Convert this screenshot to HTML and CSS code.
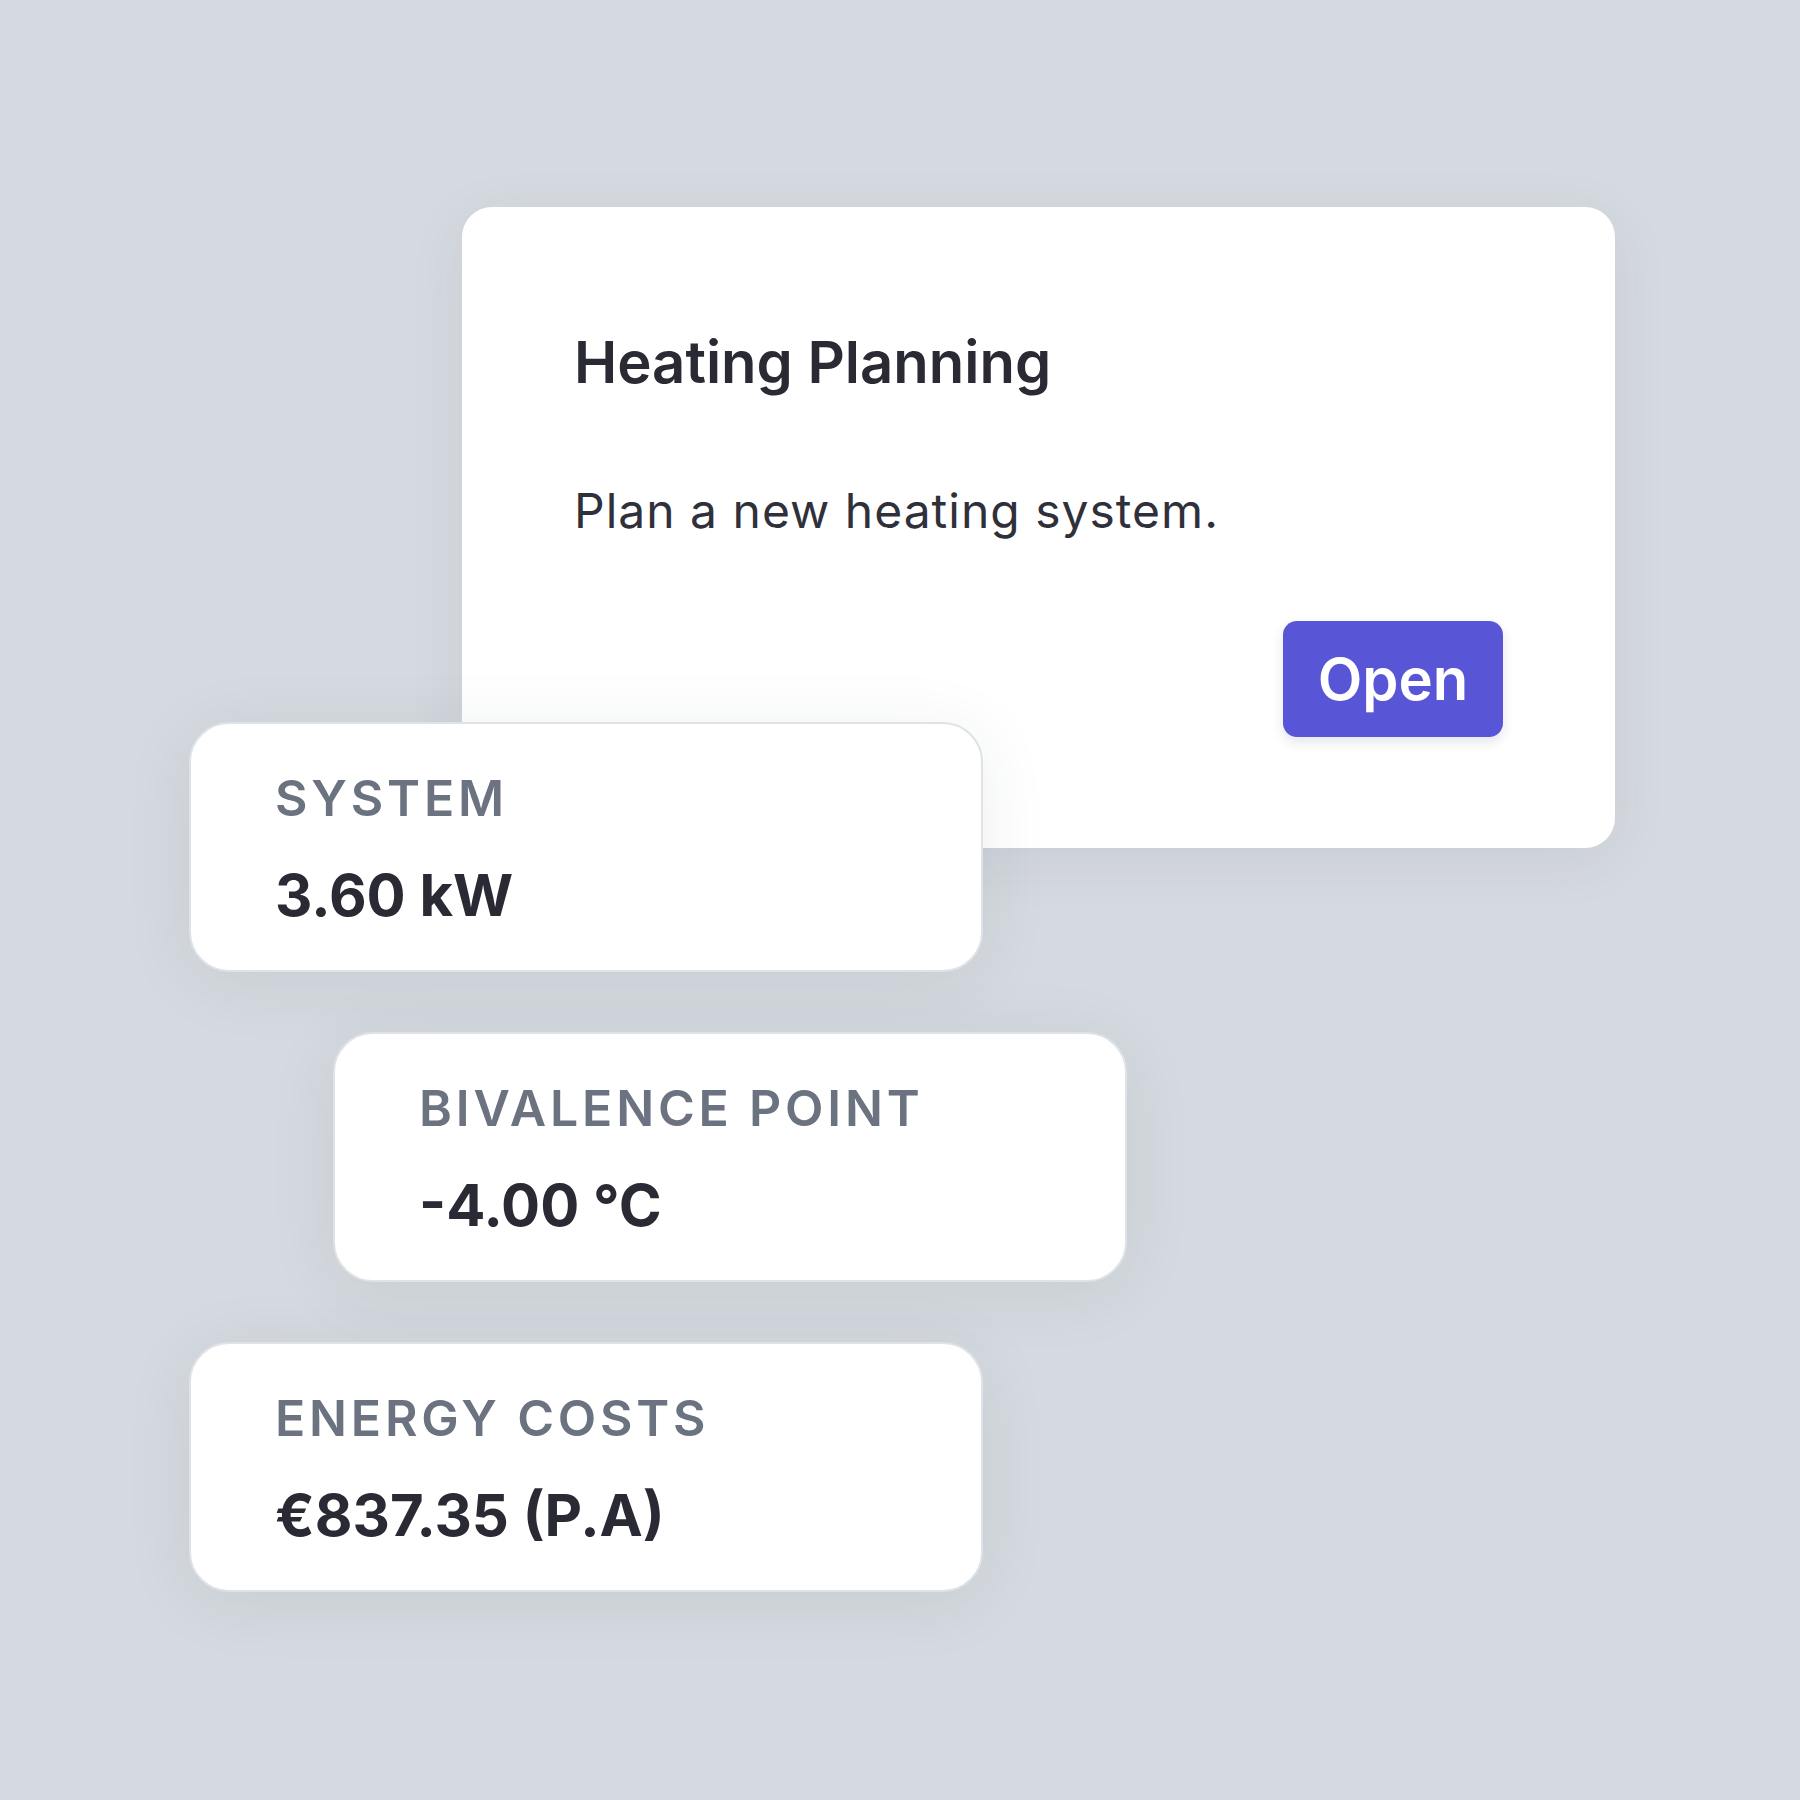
FILE: index.html
```html
<!DOCTYPE html>
<html lang="en">
<head>
<meta charset="utf-8">
<title>Heating Planning</title>
<link rel="stylesheet" href="styles.css">
</head>
<body>
<main class="scene">
  <section class="plan-card">
    <h1 class="plan-title">Heating Planning</h1>
    <p class="plan-desc">Plan a new heating system.</p>
    <div class="plan-actions">
      <button class="btn-open" type="button">Open</button>
    </div>
  </section>
  <div class="stats">
    <div class="stat">
      <div class="stat-label">SYSTEM</div>
      <div class="stat-value">3.60 kW</div>
    </div>
    <div class="stat stat-indent">
      <div class="stat-label">BIVALENCE POINT</div>
      <div class="stat-value">-4.00 °C</div>
    </div>
    <div class="stat">
      <div class="stat-label">ENERGY COSTS</div>
      <div class="stat-value">€837.35 (P.A)</div>
    </div>
  </div>
</main>
</body>
</html>
```
FILE: styles.css
```css
* { box-sizing: border-box; }
html, body {
  margin: 0;
  padding: 0;
}
body {
  width: 1800px;
  height: 1800px;
  background: #d5dae0;
  font-family: Inter, "Noto Sans", "Liberation Sans", sans-serif;
  overflow: hidden;
}
.scene {
  padding-top: 207px;
}
.plan-card {
  margin-left: 462px;
  width: 1153px;
  height: 641px;
  background: #ffffff;
  border-radius: 30px;
  padding: 120px 112px 111px 112px;
  box-shadow: 0 12px 60px rgba(40, 50, 65, 0.07);
  display: flex;
  flex-direction: column;
}
.plan-title {
  margin: 0;
  font-size: 58px;
  line-height: 70px;
  font-weight: 600;
  color: #2a2a34;
  letter-spacing: 0;
}
.plan-desc {
  margin: 85px 0 0 0;
  font-size: 48px;
  line-height: 58px;
  font-weight: 400;
  color: #30303a;
  letter-spacing: 1px;
}
.plan-actions {
  margin-top: 81px;
  display: flex;
  justify-content: flex-end;
}
.btn-open {
  width: 220px;
  height: 116px;
  border: none;
  border-radius: 14px;
  background: #5856d6;
  color: #ffffff;
  font-family: inherit;
  font-size: 58px;
  line-height: 116px;
  font-weight: 600;
  padding: 0;
  text-align: center;
  box-shadow: 0 5px 12px rgba(40, 40, 90, 0.12);
}
.stats {
  position: relative;
  z-index: 1;
  margin-top: -126px;
  padding-left: 189px;
  display: flex;
  flex-direction: column;
  align-items: flex-start;
  gap: 60px;
}
.stat {
  width: 794px;
  height: 250px;
  background: #ffffff;
  border-radius: 40px;
  border: 2px solid #dfe2e6;
  padding: 44px 0 0 84px;
  box-shadow: 0 10px 70px rgba(40, 50, 65, 0.08);
}
.stat-indent {
  margin-left: 144px;
}
.stat-label {
  font-size: 50px;
  line-height: 60px;
  font-weight: 600;
  color: #6b7280;
  letter-spacing: 3.8px;
}
.stat-value {
  margin-top: 32px;
  font-size: 58px;
  line-height: 70px;
  font-weight: 700;
  color: #2a2a34;
}
```
